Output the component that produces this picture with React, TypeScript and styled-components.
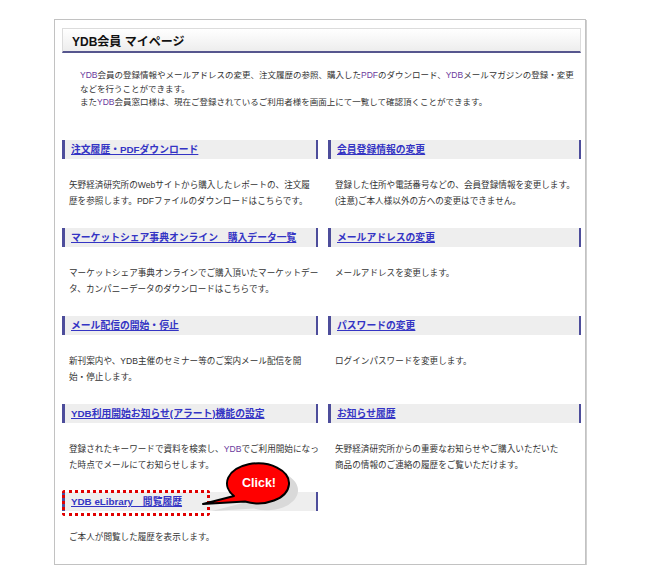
import type { ReactNode } from 'react';
import styled, { createGlobalStyle } from 'styled-components';

const GlobalStyle = createGlobalStyle`
  body {
    margin: 0;
    background: #fff;
    font-family: "Liberation Sans", "Noto Sans CJK JP", sans-serif;
    color: #333;
  }
`;

const Frame = styled.div`
  box-sizing: border-box;
  margin: 19px 0 0 54px;
  width: 532px;
  height: 546px;
  padding: 8px 4px 0 7px;
  border: 1px solid #c2c2c2;
  box-shadow: 1px 1px 0 #d0d0d0;
`;

const Header = styled.div`
  box-sizing: border-box;
  height: 25px;
  display: flex;
  align-items: center;
  padding-left: 9px;
  border: 1px solid #dcdcdc;
  border-bottom: 2px solid #56568e;
  background: linear-gradient(#ffffff, #ededed);
  font-size: 12px;
  font-weight: bold;
  color: #111;
`;

const Intro = styled.div`
  margin: 16px 0 0 18px;
  font-size: 8.5px;
  line-height: 13.5px;
  white-space: nowrap;
  color: #333;
`;

const Em = styled.span`
  color: #6a3a9c;
`;

const Columns = styled.div`
  display: grid;
  grid-template-columns: 256px 253px;
  column-gap: 10px;
  margin-top: 30px;
`;

const Column = styled.div`
  display: flex;
  flex-direction: column;
`;

const SectionBox = styled.div`
  position: relative;
`;

const Bar = styled.div`
  box-sizing: border-box;
  height: 19px;
  display: flex;
  align-items: center;
  padding-left: 6px;
  background: #eeeeee;
  border-left: 3px solid #4d4d9b;
  border-right: 2px solid #4d4d9b;
`;

const BarLink = styled.a`
  color: #3434c4;
  font-size: 9.8px;
  font-weight: bold;
  text-decoration: underline;
  white-space: nowrap;
`;

const Desc = styled.div`
  margin: 18px 0 19px 7px;
  min-height: 32px;
  font-size: 8.6px;
  line-height: 16px;
  white-space: nowrap;
  color: #333;
`;

const DottedMark = styled.div`
  position: absolute;
  left: 0;
  top: -2px;
  width: 148px;
  height: 26px;
  box-sizing: border-box;
  border: 3px dotted #e00000;
  border-radius: 3px;
`;

const Bubble = styled.svg`
  position: absolute;
  left: 140px;
  top: -33px;
  overflow: visible;
`;

type Item = {
  title: string;
  lines: ReactNode[];
};

const leftItems: Item[] = [
  {
    title: '注文履歴・PDFダウンロード',
    lines: [
      '矢野経済研究所のWebサイトから購入したレポートの、注文履',
      '歴を参照します。PDFファイルのダウンロードはこちらです。',
    ],
  },
  {
    title: 'マーケットシェア事典オンライン　購入データ一覧',
    lines: [
      'マーケットシェア事典オンラインでご購入頂いたマーケットデー',
      'タ、カンパニーデータのダウンロードはこちらです。',
    ],
  },
  {
    title: 'メール配信の開始・停止',
    lines: [
      '新刊案内や、YDB主催のセミナー等のご案内メール配信を開',
      '始・停止します。',
    ],
  },
  {
    title: 'YDB利用開始お知らせ(アラート)機能の設定',
    lines: [
      <>
        登録されたキーワードで資料を検索し、<Em>YDB</Em>でご利用開始になっ
      </>,
      'た時点でメールにてお知らせします。',
    ],
  },
];

const rightItems: Item[] = [
  {
    title: '会員登録情報の変更',
    lines: [
      '登録した住所や電話番号などの、会員登録情報を変更します。',
      '(注意)ご本人様以外の方への変更はできません。',
    ],
  },
  {
    title: 'メールアドレスの変更',
    lines: ['メールアドレスを変更します。'],
  },
  {
    title: 'パスワードの変更',
    lines: ['ログインパスワードを変更します。'],
  },
  {
    title: 'お知らせ履歴',
    lines: [
      '矢野経済研究所からの重要なお知らせやご購入いただいた',
      '商品の情報のご連絡の履歴をご覧いただけます。',
    ],
  },
];

const Section = ({ item }: { item: Item }) => (
  <SectionBox>
    <Bar>
      <BarLink href="#">{item.title}</BarLink>
    </Bar>
    <Desc>
      {item.lines.map((l, i) => (
        <div key={i}>{l}</div>
      ))}
    </Desc>
  </SectionBox>
);

const bubblePath = 'M 43 42.5 L 1 45 L 32 37 A 31 20 0 1 1 43 42.5 Z';

const ClickBubble = () => (
  <Bubble width="110" height="62" viewBox="0 0 110 62">
    <path d={bubblePath} fill="#d9d9d9" transform="translate(9 7)" />
    <path
      d={bubblePath}
      fill="#ff0000"
      stroke="#000"
      strokeWidth="2"
      strokeLinejoin="round"
    />
    <text
      x="57"
      y="28"
      textAnchor="middle"
      fill="#fff"
      fontFamily="Liberation Sans, Arial, sans-serif"
      fontWeight="bold"
      fontSize="12.5"
    >
      Click!
    </text>
  </Bubble>
);

const App = () => {
  return (
    <>
      <GlobalStyle />
      <Frame>
        <Header>YDB会員 マイページ</Header>
        <Intro>
          <Em>YDB</Em>会員の登録情報やメールアドレスの変更、注文履歴の参照、購入した<Em>PDF</Em>のダウンロード、<Em>YDB</Em>メールマガジンの登録・変更
          <br />
          などを行うことができます。
          <br />
          また<Em>YDB</Em>会員窓口様は、現在ご登録されているご利用者様を画面上にて一覧して確認頂くことができます。
        </Intro>
        <Columns>
          <Column>
            {leftItems.map((it) => (
              <Section key={it.title} item={it} />
            ))}
            <SectionBox>
              <Bar>
                <BarLink href="#">YDB eLibrary　閲覧履歴</BarLink>
              </Bar>
              <Desc>ご本人が閲覧した履歴を表示します。</Desc>
              <DottedMark />
              <ClickBubble />
            </SectionBox>
          </Column>
          <Column>
            {rightItems.map((it) => (
              <Section key={it.title} item={it} />
            ))}
          </Column>
        </Columns>
      </Frame>
    </>
  );
};

export default App;
